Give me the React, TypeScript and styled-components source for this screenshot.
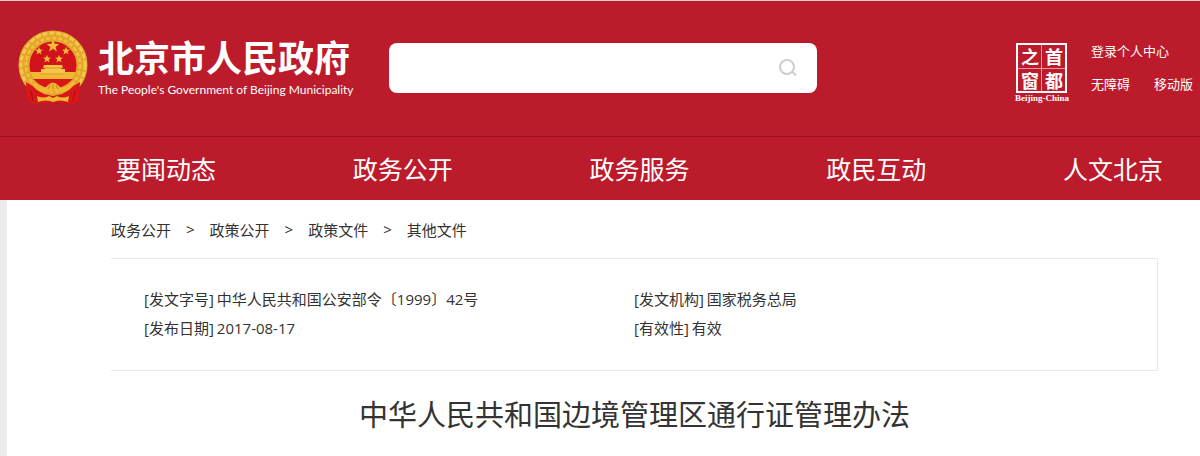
import React from "react";
import styled, { createGlobalStyle } from "styled-components";

const GlobalStyle = createGlobalStyle`
  * { box-sizing: border-box; }
  body {
    margin: 0;
    background: #fff;
    color: #333;
    font-family: "Open Sans", "Noto Sans CJK SC", sans-serif;
    font-size: 15px;
  }
  a { color: inherit; text-decoration: none; }
`;

const Page = styled.div`
  display: flex;
  flex-direction: column;
  min-height: 100vh;
`;

const Header = styled.header`
  background: #bc1b2b;
  color: #fff;
  border-top: 1px solid #f3cfcd;
`;

const Masthead = styled.div`
  display: flex;
  align-items: center;
  height: 135px;
  padding: 0 7px 2px 16px;
`;

const Brand = styled.a`
  display: flex;
  align-items: center;
  gap: 8px;
  flex: none;
  width: 373px;
`;

const BrandText = styled.span`
  display: flex;
  flex-direction: column;
  padding-top: 4px;
  white-space: nowrap;
`;

const BrandName = styled.span`
  font-family: "Noto Sans CJK SC", sans-serif;
  font-size: 36px;
  font-weight: 700;
  line-height: 40px;
`;

const BrandEnglish = styled.span`
  font-family: Lato, sans-serif;
  font-size: 12px;
  line-height: 28px;
`;

const Search = styled.form`
  display: flex;
  align-items: center;
  flex: 0 1 428px;
  height: 50px;
  padding: 0 16px 0 20px;
  background: #fff;
  border-radius: 8px;
`;

const SearchInput = styled.input`
  flex: 1;
  min-width: 0;
  height: 40px;
  border: 0;
  outline: 0;
  background: transparent;
  font: inherit;
`;

const SearchButton = styled.button`
  display: flex;
  padding: 2px;
  border: 0;
  background: transparent;
`;

const Tools = styled.div`
  display: flex;
  align-items: center;
  gap: 22px;
  margin-left: auto;
`;

const Seal = styled.a`
  display: flex;
  flex-direction: column;
  align-items: center;
  padding-top: 12px;
`;

const SealGrid = styled.span`
  display: grid;
  grid-template-columns: 1fr 1fr;
  grid-template-rows: 1fr 1fr;
  gap: 1px;
  width: 51px;
  height: 50px;
  border: 2px solid #fff;
  background: #e79aa1;
`;

const SealCell = styled.span`
  display: flex;
  align-items: center;
  justify-content: center;
  background: #bc1b2b;
  font-family: "Noto Sans CJK SC", sans-serif;
  font-size: 18px;
  font-weight: 700;
  line-height: 20px;
`;

const SealCaption = styled.span`
  font-family: "Liberation Serif", serif;
  font-size: 9px;
  font-weight: 700;
  line-height: 11px;
`;

const ToolLinks = styled.div`
  display: flex;
  flex-direction: column;
  gap: 12px;
  font-size: 13px;
  line-height: 21px;
`;

const ToolRow = styled.div`
  display: flex;
  gap: 24px;
`;

const Nav = styled.nav`
  display: flex;
  justify-content: space-between;
  align-items: center;
  height: 64px;
  padding: 0 37px 2px 116px;
  border-top: 1px solid #a00d20;
  font-size: 25px;
`;

const Main = styled.main`
  flex: 1;
  padding: 0 42px 0 104px;
  border-left: 7px solid #ececec;
`;

const Breadcrumb = styled.nav`
  display: flex;
  align-items: center;
  height: 58px;
  gap: 15px;
`;

const Facts = styled.dl`
  display: grid;
  grid-template-columns: 490px 1fr;
  margin: 0;
  padding: 26px 33px 27px;
  border: solid #e8e8e4;
  border-width: 1px 1px 1px 0;
  line-height: 29px;
`;

const Fact = styled.div`
  display: flex;
  gap: 3px;
`;

const FactLabel = styled.dt``;

const FactValue = styled.dd`
  margin: 0;
`;

const Title = styled.h1`
  margin: 24px 0 0;
  font-size: 29px;
  font-weight: 400;
  line-height: 40px;
  text-align: center;
`;

const STAR = "M0-6 1.5-2 5.7-1.9 2.4.8 3.5 4.9 0 2.5-3.5 4.9-2.4.8-5.7-1.9-1.5-2Z";

const stars = [
  { x: 37, y: 18, scale: 1.1 },
  { x: 23, y: 23, scale: 0.7 },
  { x: 50, y: 23, scale: 0.7 },
  { x: 31, y: 31, scale: 0.7 },
  { x: 43, y: 31, scale: 0.7 },
];

const Emblem = () => (
  <svg width="74" height="80" viewBox="0 0 74 80" aria-hidden="true">
    <path d="M10 50 11 72Q16 78 24 75H51Q59 78 63 72L64 50Z" fill="#d81718" />
    <circle cx="37" cy="37" r="29" fill="#d3131b" />
    <path d="M13 44H61V51H13Z" fill="#f1b832" />
    <circle cx="37" cy="37" r="29" fill="none" stroke="#e3a52a" strokeWidth="11" />
    <circle cx="37" cy="37" r="32" fill="none" stroke="#f3c94d" strokeWidth="3" strokeDasharray="5 2" />
    <circle cx="37" cy="37" r="27" fill="none" stroke="#f0bd3c" strokeWidth="3" strokeDasharray="4 2" />
    {stars.map((s) => (
      <path key={`${s.x}-${s.y}`} d={STAR} fill="#f4bd35" transform={`translate(${s.x} ${s.y}) scale(${s.scale})`} />
    ))}
    <path d="M28 37H46L47 40H45V41H49V47H25V41H29V40H27Z" fill="#f5c64a" />
    <path d="M28 40H46M25 46H49" stroke="#d9921f" strokeWidth="1" />
    <path d="M17 51H57L51 56 45 58Q37 50 29 58L23 56Z" fill="#d81718" />
    <path d="M10 54Q16 57 21 62L28 66 37 68 46 66 53 62Q58 57 64 54L63 72Q55 66 51 70L37 72 23 70Q18 66 11 72Z" fill="#d81718" />
    <path d="M17 54Q24 59 29 60L32 57Q37 52 42 57L45 60Q50 59 57 54L55 60Q47 66 42 64L37 62 32 64Q26 66 19 60Z" fill="#f1b832" />
    <path d="M32 61 34 57M37 61V56M42 61 40 57" stroke="#c67d16" strokeWidth="1" />
    <path d="M21 68Q28 71 33 68L37 70 41 68Q46 71 53 68L52 74Q44 71 37 74 30 71 22 74Z" fill="#f1b832" />
    <path d="M15 62 17 73M59 62 57 73" stroke="#a90e19" strokeWidth="1" />
  </svg>
);

const navItems = ["要闻动态", "政务公开", "政务服务", "政民互动", "人文北京"];
const crumbs = ["政务公开", "政策公开", "政策文件", "其他文件"];
const facts = [
  ["[发文字号]", "中华人民共和国公安部令〔1999〕42号"],
  ["[发文机构]", "国家税务总局"],
  ["[发布日期]", "2017-08-17"],
  ["[有效性]", "有效"],
];

export default function App() {
  return (
    <Page lang="zh-CN">
      <GlobalStyle />
      <Header>
        <Masthead>
          <Brand href="#">
            <Emblem />
            <BrandText>
              <BrandName>北京市人民政府</BrandName>
              <BrandEnglish>The People's Government of Beijing Municipality</BrandEnglish>
            </BrandText>
          </Brand>
          <Search role="search">
            <SearchInput type="text" aria-label="搜索" />
            <SearchButton type="button" aria-label="搜索">
              <svg width="22" height="22" viewBox="0 0 22 22" fill="none" stroke="#cdcdcd" strokeWidth="2">
                <circle cx="10" cy="10" r="7" />
                <path d="M15 14.5 19 18.5" />
              </svg>
            </SearchButton>
          </Search>
          <Tools>
            <Seal href="#">
              <SealGrid>
                {["之", "首", "窗", "都"].map((c) => (
                  <SealCell key={c}>{c}</SealCell>
                ))}
              </SealGrid>
              <SealCaption>Beijing-China</SealCaption>
            </Seal>
            <ToolLinks>
              <a href="#">登录个人中心</a>
              <ToolRow>
                <a href="#">无障碍</a>
                <a href="#">移动版</a>
              </ToolRow>
            </ToolLinks>
          </Tools>
        </Masthead>
        <Nav>
          {navItems.map((item) => (
            <a key={item} href="#">{item}</a>
          ))}
        </Nav>
      </Header>
      <Main>
        <Breadcrumb>
          {crumbs.map((crumb, i) => (
            <React.Fragment key={crumb}>
              {i > 0 && <span>&gt;</span>}
              <a href="#">{crumb}</a>
            </React.Fragment>
          ))}
        </Breadcrumb>
        <Facts>
          {facts.map(([label, value]) => (
            <Fact key={label}>
              <FactLabel>{label}</FactLabel>
              <FactValue>{value}</FactValue>
            </Fact>
          ))}
        </Facts>
        <Title>中华人民共和国边境管理区通行证管理办法</Title>
      </Main>
    </Page>
  );
}
